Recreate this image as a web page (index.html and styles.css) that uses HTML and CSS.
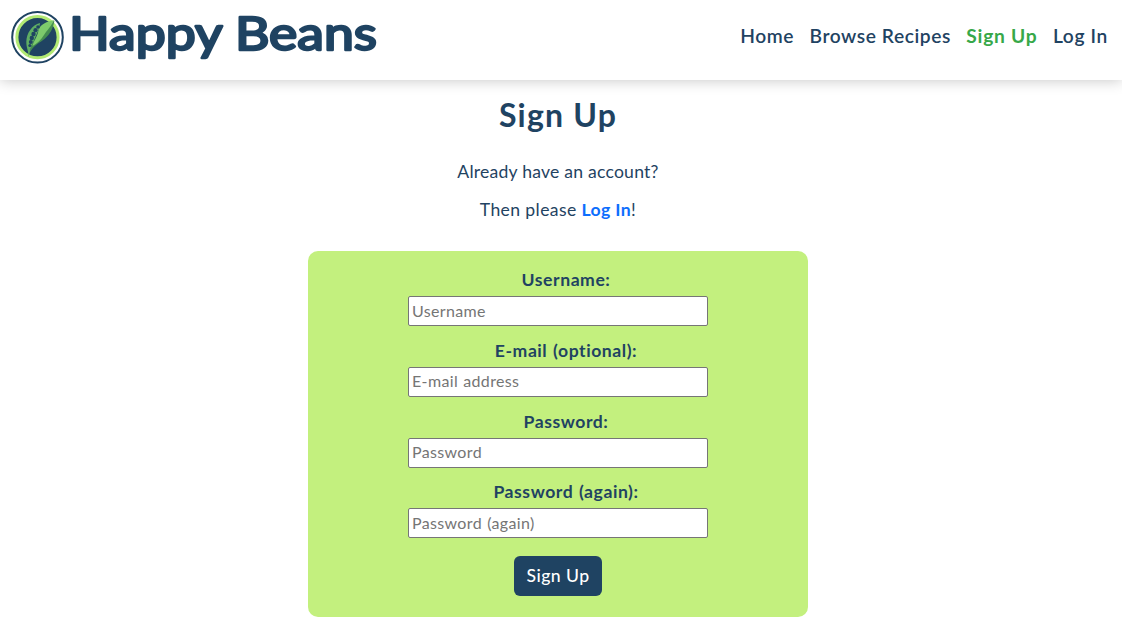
FILE: index.html
```html
<!DOCTYPE html>
<html lang="en">
<head>
<meta charset="utf-8">
<meta name="viewport" content="width=device-width, initial-scale=1">
<title>Sign Up - Happy Beans</title>
<link rel="stylesheet" href="styles.css">
</head>
<body>
<header class="site-header">
  <a class="brand" href="#" aria-label="Happy Beans">
    <svg class="brand-logo" width="372" height="80" viewBox="0 0 372 80">
      <circle cx="29.500" cy="37.200" r="25.300" fill="#fff" stroke="#1f4362" stroke-width="2"/>
      <circle cx="29.500" cy="37.200" r="20.600" fill="#1f4362" stroke="#b2ea74" stroke-width="3"/>
      <path d="M46.500 20.500C45 29 42 34 37 38.500C32 43 26 44 21 54L24 44L34 28Z" fill="#448c50"/>
      <path d="M46 20C38 21.500 32 25 30.500 30C29.500 37 26 40 24.500 46C29 43.500 33 40 36 35C39 30 43 27 46 20Z" fill="#7dca6c"/>
      <path d="M32 23C24 25 18.500 33 18.300 42C18.300 48 20.500 50 20.500 57C22 53 22 49 23.500 46L31 29Z" fill="#5fae63"/>
      <g fill="#1f4362">
        <circle cx="30" cy="27" r="1.800"/><circle cx="27.500" cy="30.200" r="2.100"/>
        <circle cx="25.500" cy="34" r="2.200"/><circle cx="23.800" cy="38" r="2.200"/>
        <circle cx="22.800" cy="42" r="2"/><circle cx="21.800" cy="45.500" r="1.500"/>
      </g>
      <text class="brand-name" x="61" y="49.500" textLength="308" lengthAdjust="spacingAndGlyphs">Happy Beans</text>
    </svg>
  </a>
  <nav class="site-nav">
    <a class="nav-home" href="#">Home</a>
    <a class="nav-browse" href="#">Browse Recipes</a>
    <a class="nav-signup" href="#">Sign Up</a>
    <a class="nav-login" href="#">Log In</a>
  </nav>
</header>
<main class="page">
  <h1 class="title">Sign Up</h1>
  <p class="intro">Already have an account?</p>
  <p class="intro intro-login">Then please <a class="login-link" href="#">Log In</a>!</p>
  <form class="signup-form">
    <label class="label" for="username">Username:</label>
    <input class="field" id="username" type="text" placeholder="Username">
    <label class="label" for="email">E-mail (optional):</label>
    <input class="field" id="email" type="email" placeholder="E-mail address">
    <label class="label" for="password">Password:</label>
    <input class="field" id="password" type="password" placeholder="Password">
    <label class="label" for="password2">Password (again):</label>
    <input class="field" id="password2" type="password" placeholder="Password (again)">
    <button class="submit" type="button">Sign Up</button>
  </form>
</main>
</body>
</html>
```
FILE: styles.css
```css
* { box-sizing: border-box; }
body {
  margin: 0;
  height: 627px;
  overflow: hidden;
  background: #fff;
  color: #1f4362;
  font-family: Lato, "Open Sans", sans-serif;
}
a { text-decoration: none; }
.site-header {
  height: 80px;
  padding: 0 14px 0 8px;
  display: flex;
  justify-content: space-between;
  background: #fff;
  box-shadow: 0 0 14px rgba(0, 0, 0, .24);
}
.brand-logo { display: block; overflow: visible; }
.brand-name {
  font-family: Lato, sans-serif;
  font-size: 46px;
  font-weight: 400;
  fill: #1f4362;
  stroke: #1f4362;
  stroke-width: 2.4;
  stroke-linejoin: round;
}
.site-nav {
  display: flex;
  gap: 15.5px;
  padding-top: 23px;
  font-size: 19.2px;
  font-weight: 600;
  line-height: 26px;
  letter-spacing: .56px;
  white-space: nowrap;
}
.site-nav a { color: #1f4362; }
.site-nav .nav-signup { color: #37a849; font-weight: 700; letter-spacing: .75px; }
.site-nav .nav-login { letter-spacing: .65px; }
.page {
  width: 1116px;
  padding-top: 13px;
  display: flex;
  flex-direction: column;
  align-items: center;
}
.title {
  margin: 0 0 21px;
  font-size: 32px;
  line-height: 44px;
  font-weight: 700;
  letter-spacing: 1.2px;
}
.intro {
  margin: 0 0 10px;
  font-size: 17.6px;
  line-height: 28px;
  letter-spacing: .22px;
}
.intro-login { letter-spacing: .38px; }
.login-link { color: #0d6efd; font-weight: 700; }
.signup-form {
  width: 500px;
  height: 366px;
  margin-top: 17px;
  padding: 14px 100px 0;
  display: flex;
  flex-direction: column;
  align-items: center;
  background: #c3f07e;
  border-radius: 10px;
}
.label {
  margin-left: 16px;
  padding-bottom: 2px;
  font-size: 17.6px;
  line-height: 29px;
  font-weight: 700;
  letter-spacing: .55px;
  word-spacing: 1px;
}
.field {
  width: 300px;
  height: 30px;
  margin: 0 0 9.8px;
  padding: 0 3px 2px;
  border: 1px solid #767676;
  border-radius: 2px;
  background: #fff;
  font: 16px/24px Lato, sans-serif;
  letter-spacing: .35px;
  word-spacing: .8px;
}
.field::placeholder { color: #757575; }
.submit {
  width: 88px;
  height: 40px;
  margin-top: 8px;
  padding: 0;
  border: 0;
  border-radius: 6px;
  background: #1f4362;
  color: #fff;
  font: 500 17.6px/28px Lato, sans-serif;
  letter-spacing: .45px;
}
```
